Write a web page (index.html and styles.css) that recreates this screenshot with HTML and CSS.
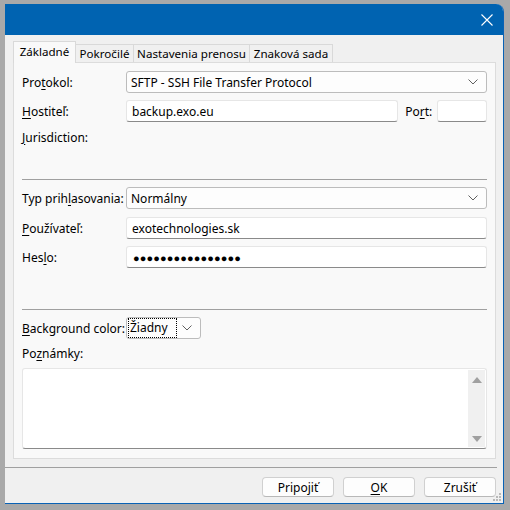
FILE: index.html
```html
<!DOCTYPE html>
<html>
<head>
<meta charset="utf-8">
<link rel="stylesheet" href="styles.css">
</head>
<body>
<div class="window">
  <div class="titlebar">
    <svg class="close" width="12" height="12" viewBox="0 0 12 12"><path d="M0.5 0.5 L11.5 11.5 M11.5 0.5 L0.5 11.5" stroke="#fff" stroke-width="1.1" fill="none"/></svg>
  </div>
  <div class="tabs">
    <div class="tab sel t1">Základné</div>
    <div class="tab t2">Pokročilé</div>
    <div class="tab t3">Nastavenia prenosu</div>
    <div class="tab t4">Znaková sada</div>
  </div>
  <div class="panel">
    <div class="row r1">
      <div class="label">Pro<u>t</u>okol:</div>
      <div class="combo wide"><span>SFTP - SSH File Transfer Protocol</span><svg class="chev" width="10" height="6" viewBox="0 0 10 6"><path d="M0.5 0.5 L5 5 L9.5 0.5" stroke="#606060" stroke-width="1" fill="none"/></svg></div>
    </div>
    <div class="row r2">
      <div class="label"><u>H</u>ostiteľ:</div>
      <div class="input host">backup.exo.eu</div>
      <div class="plabel">Po<u>r</u>t:</div>
      <div class="input port"></div>
    </div>
    <div class="row r3">
      <div class="label"><u>J</u>urisdiction:</div>
    </div>
    <div class="sep s1"></div>
    <div class="row r4">
      <div class="label">Typ prih<u>l</u>asovania:</div>
      <div class="combo wide"><span>Normálny</span><svg class="chev" width="10" height="6" viewBox="0 0 10 6"><path d="M0.5 0.5 L5 5 L9.5 0.5" stroke="#606060" stroke-width="1" fill="none"/></svg></div>
    </div>
    <div class="row r5">
      <div class="label"><u>P</u>oužívateľ:</div>
      <div class="input full">exotechnologies.sk</div>
    </div>
    <div class="row r6">
      <div class="label">Hes<u>l</u>o:</div>
      <div class="input full dots">●●●●●●●●●●●●●●●●</div>
    </div>
    <div class="sep s2"></div>
    <div class="row r7">
      <div class="label"><u>B</u>ackground color:</div>
      <div class="combo small"><span class="focus">Žiadny</span><svg class="chev" width="10" height="6" viewBox="0 0 10 6"><path d="M0.5 0.5 L5 5 L9.5 0.5" stroke="#606060" stroke-width="1" fill="none"/></svg></div>
    </div>
    <div class="row r8">
      <div class="label">Po<u>z</u>námky:</div>
    </div>
    <div class="notes">
      <div class="notes-text"></div>
      <div class="scroll">
        <svg width="10" height="6" viewBox="0 0 10 6"><path d="M0 6 L5 0 L10 6 Z" fill="#a0a0a0"/></svg>
        <svg width="10" height="6" viewBox="0 0 10 6"><path d="M0 0 L5 6 L10 0 Z" fill="#a0a0a0"/></svg>
      </div>
    </div>
  </div>
  <div class="wsep"></div>
  <div class="buttons">
    <div class="btn">Pripojiť</div>
    <div class="btn"><u>O</u>K</div>
    <div class="btn">Zrušiť</div>
  </div>
  <svg class="grip" width="10" height="10" viewBox="0 0 10 10" fill="#b8b8b8"><rect x="7" y="1" width="2" height="2"/><rect x="4" y="4" width="2" height="2"/><rect x="7" y="4" width="2" height="2"/><rect x="1" y="7" width="2" height="2"/><rect x="4" y="7" width="2" height="2"/><rect x="7" y="7" width="2" height="2"/></svg>
</div>
</body>
</html>
```

FILE: styles.css
```css
html, body {
  margin: 0;
  padding: 0;
  background: #a9a9a9;
  width: 510px;
  height: 510px;
  overflow: hidden;
}
body {
  font-family: "Noto Sans", "Open Sans", sans-serif;
  font-size: 12px;
  color: #000;
}
u { text-decoration-thickness: 1px; text-underline-offset: 2px; }
.window {
  position: relative;
  margin: 4px 0 0 5px;
  width: 499px;
  height: 500px;
  background: #f0f0f0;
  border-right: 1px solid #0a62b5;
  border-bottom: 1px solid #0a62b5;
  border-top-right-radius: 8px;
  box-sizing: border-box;
  display: flex;
  flex-direction: column;
}
.titlebar {
  height: 31px;
  background: #0063b1;
  border-top-right-radius: 7px;
  display: flex;
  justify-content: flex-end;
  align-items: center;
  padding-right: 10px;
  flex: none;
}
.close { display: block; margin-top: 0; }
.tabs {
  display: flex;
  align-items: flex-end;
  height: 21px;
  margin-top: 6px;
  padding-left: 8px;
  position: relative;
  z-index: 2;
  flex: none;
  font-size: 11.6px;
}
.tab {
  height: 18px;
  box-sizing: border-box;
  border: 1px solid #d9d9d9;
  border-bottom: none;
  border-left: none;
  background: #f0f0f0;
  display: flex;
  align-items: center;
  justify-content: center;
  line-height: 1;
}
.tab.sel {
  height: 22px;
  margin-bottom: -1px;
  background: #f9f9f9;
  border-left: 1px solid #d9d9d9;
  padding-bottom: 2px;
}
.t1 { width: 63px; }
.t2 { width: 58px; }
.t3 { width: 116px; }
.t4 { width: 83px; }
.panel {
  margin-left: 8px;
  width: 483px;
  height: 397px;
  box-sizing: border-box;
  background: #f9f9f9;
  border: 1px solid #dcdcdc;
  padding: 8px 8px 0 8px;
  display: flex;
  flex-direction: column;
  flex: none;
}
.row {
  display: flex;
  align-items: center;
  height: 22px;
  flex: none;
}
.label { width: 104px; flex: none; }
.r2 { margin-top: 7px; }
.r3 { margin-top: 7px; height: 16px; }
.s1 { margin-top: 34px; }
.r4 { margin-top: 7px; }
.r5 { margin-top: 8px; }
.r6 { margin-top: 7px; }
.s2 { margin-top: 41px; }
.r7 { margin-top: 7px; }
.r8 { margin-top: 5px; height: 18px; }
.sep {
  height: 1px;
  background: #a0a0a0;
  width: 465px;
  flex: none;
}
.combo {
  height: 22px;
  box-sizing: border-box;
  border: 1px solid #bcbcbc;
  border-radius: 3px;
  background: #fdfdfd;
  display: flex;
  align-items: center;
  justify-content: space-between;
  padding: 0 8px 0 4px;
}
.combo.wide { width: 362px; }
.combo.small { width: 75px; padding-left: 2px; }
.focus {
  outline: 1px dotted #000;
  outline-offset: 0;
  padding: 1px 8px 1px 1px;
  line-height: 16px;
}
.chev { display: block; }
.input {
  height: 22px;
  box-sizing: border-box;
  border: 1px solid #e6e6e6;
  border-bottom: 1px solid #8a8a8a;
  border-radius: 3px;
  background: #fff;
  display: flex;
  align-items: center;
  padding-left: 5px;
}
.host { width: 273px; }
.plabel { width: 40px; padding-left: 7px; box-sizing: border-box; flex: none; }
.port { width: 50px; margin-left: -1px; }
.full { width: 362px; }
.dots { font-size: 11px; letter-spacing: 0.1px; padding-left: 6px; }
.notes {
  margin-top: 6px;
  width: 465px;
  height: 81px;
  box-sizing: border-box;
  border: 1px solid #e6e6e6;
  border-bottom: 1px solid #8a8a8a;
  border-radius: 3px;
  background: #fff;
  display: flex;
  justify-content: space-between;
  padding: 1px;
  flex: none;
}
.scroll {
  width: 17px;
  background: #f0f0f0;
  display: flex;
  flex-direction: column;
  justify-content: space-between;
  align-items: center;
  padding: 7px 0 5px;
  box-sizing: border-box;
}
.scroll svg { display: block; }
.wsep {
  margin-top: 8px;
  height: 1px;
  width: 492px;
  background: #a0a0a0;
  flex: none;
}
.buttons {
  display: flex;
  justify-content: flex-end;
  gap: 9px;
  margin-top: 9px;
  width: 491px;
  flex: none;
}
.btn {
  width: 72px;
  height: 20px;
  box-sizing: border-box;
  border: 1px solid #d0d0d0;
  border-bottom-color: #b8b8b8;
  border-radius: 4px;
  background: #fdfdfd;
  display: flex;
  align-items: center;
  justify-content: center;
}
.grip {
  position: absolute;
  right: 1px;
  bottom: 1px;
}
```
